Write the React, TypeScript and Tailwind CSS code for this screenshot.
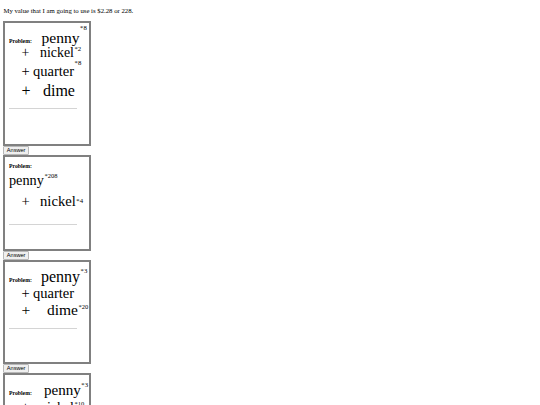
import React from "react";

// Worksheet of coin-sum problems: each card shows the terms stacked with
// their multipliers, a rule for the working, and an Answer button below.

function Card({ className, children }: { className: string; children: React.ReactNode }) {
  return (
    <div className={`box-border w-[88px] border-2 border-[#808080] bg-white ${className}`}>
      {children}
    </div>
  );
}

function Rule({ className }: { className: string }) {
  return <div className={`ml-[3.6px] h-px w-[68px] bg-[#d4d4d4] ${className}`} />;
}

function AnswerButton() {
  return (
    <button
      type="button"
      className="box-border block h-[9px] rounded-[1px] border border-[#b8b8b8] bg-[#efefef] px-[2.4px] font-['Liberation_Sans',Arial,sans-serif] text-[5.625px] leading-none text-black"
    >
      Answer
    </button>
  );
}

export default function App() {
  return (
    <div className="min-h-[405px] overflow-hidden bg-white px-[3.375px] pt-[6.75px] font-['Liberation_Serif','Times_New_Roman',serif] text-black">
      <p className="mb-[6.75px] text-[6.75px] leading-[7.76px]">
        My value that I am going to use is $2.28 or 228.
      </p>

      {/* problem 1 */}
      <Card className="h-[124.7px] pt-[6.6px]">
        <div className="flex h-[16.5px] items-baseline whitespace-nowrap">
          <span className="w-[36.1px] shrink-0 pl-[3.6px] text-[5.75px] font-bold leading-none">Problem:</span>
          <span className="text-[15.6px] leading-none">penny</span>
          <span className="relative -top-[13.2px] ml-[0.5px] text-[6.75px] leading-none">*8</span>
        </div>
        <div className="flex h-[17.5px] items-baseline whitespace-nowrap">
          <span className="w-[34.6px] shrink-0 pl-[16.2px] text-[13.9px] leading-none">+</span>
          <span className="text-[13.9px] leading-none">nickel</span>
          <span className="relative -top-[6px] ml-[0.5px] text-[6.75px] leading-none">*2</span>
        </div>
        <div className="flex h-[18.7px] items-baseline whitespace-nowrap">
          <span className="w-[27.6px] shrink-0 pl-[16.2px] text-[14.5px] leading-none">+</span>
          <span className="text-[14.5px] leading-none">quarter</span>
          <span className="relative -top-[10.5px] ml-[0.5px] text-[6.75px] leading-none">*8</span>
        </div>
        <div className="flex h-[16px] items-baseline whitespace-nowrap">
          <span className="w-[37.6px] shrink-0 pl-[16.2px] text-[16px] leading-none">+</span>
          <span className="text-[16px] leading-none">dime</span>
        </div>
        <Rule className="mt-[9.4px]" />
      </Card>
      <AnswerButton />

      {/* problem 2 */}
      <Card className="h-[96px] pt-[7.2px]">
        <div className="flex h-[8.8px] items-baseline whitespace-nowrap">
          <span className="pl-[3.6px] text-[5.75px] font-bold leading-none">Problem:</span>
        </div>
        <div className="flex h-[21.2px] items-baseline whitespace-nowrap pl-[3.6px]">
          <span className="text-[14.3px] leading-none">penny</span>
          <span className="relative -top-[6.7px] ml-[0.5px] text-[6.5px] leading-none">*208</span>
        </div>
        <div className="flex h-[16px] items-baseline whitespace-nowrap">
          <span className="w-[34.6px] shrink-0 pl-[16.2px] text-[14.7px] leading-none">+</span>
          <span className="text-[14.7px] leading-none">nickel</span>
          <span className="relative -top-[3px] ml-[0.5px] text-[6.75px] leading-none">*4</span>
        </div>
        <Rule className="mt-[13.8px]" />
      </Card>
      <AnswerButton />

      {/* problem 3 */}
      <Card className="h-[104.3px] pt-[6.6px]">
        <div className="flex h-[17.5px] items-baseline whitespace-nowrap">
          <span className="w-[35.6px] shrink-0 pl-[3.6px] text-[5.75px] font-bold leading-none">Problem:</span>
          <span className="text-[16px] leading-none">penny</span>
          <span className="relative -top-[8.2px] ml-[0.5px] text-[6.75px] leading-none">*3</span>
        </div>
        <div className="flex h-[16.2px] items-baseline whitespace-nowrap">
          <span className="w-[27.6px] shrink-0 pl-[16.2px] text-[14.5px] leading-none">+</span>
          <span className="text-[14.5px] leading-none">quarter</span>
        </div>
        <div className="flex h-[16px] items-baseline whitespace-nowrap">
          <span className="w-[41.6px] shrink-0 pl-[16.2px] text-[15.5px] leading-none">+</span>
          <span className="text-[15.5px] leading-none">dime</span>
          <span className="relative -top-[6.5px] ml-[0.5px] text-[6.5px] leading-none">*20</span>
        </div>
        <Rule className="mt-[10px]" />
      </Card>
      <AnswerButton />

      {/* problem 4 */}
      <Card className="h-[110px] pt-[8px]">
        <div className="flex h-[17.5px] items-baseline whitespace-nowrap">
          <span className="w-[38.6px] shrink-0 pl-[3.6px] text-[5.75px] font-bold leading-none">Problem:</span>
          <span className="text-[15.1px] leading-none">penny</span>
          <span className="relative -top-[8.2px] ml-[0.5px] text-[6.75px] leading-none">*3</span>
        </div>
        <div className="flex h-[16px] items-baseline whitespace-nowrap">
          <span className="w-[34.6px] shrink-0 pl-[16.2px] text-[13.9px] leading-none">+</span>
          <span className="text-[13.9px] leading-none">nickel</span>
          <span className="relative -top-[6px] ml-[0.5px] text-[6.5px] leading-none">*10</span>
        </div>
      </Card>
    </div>
  );
}
